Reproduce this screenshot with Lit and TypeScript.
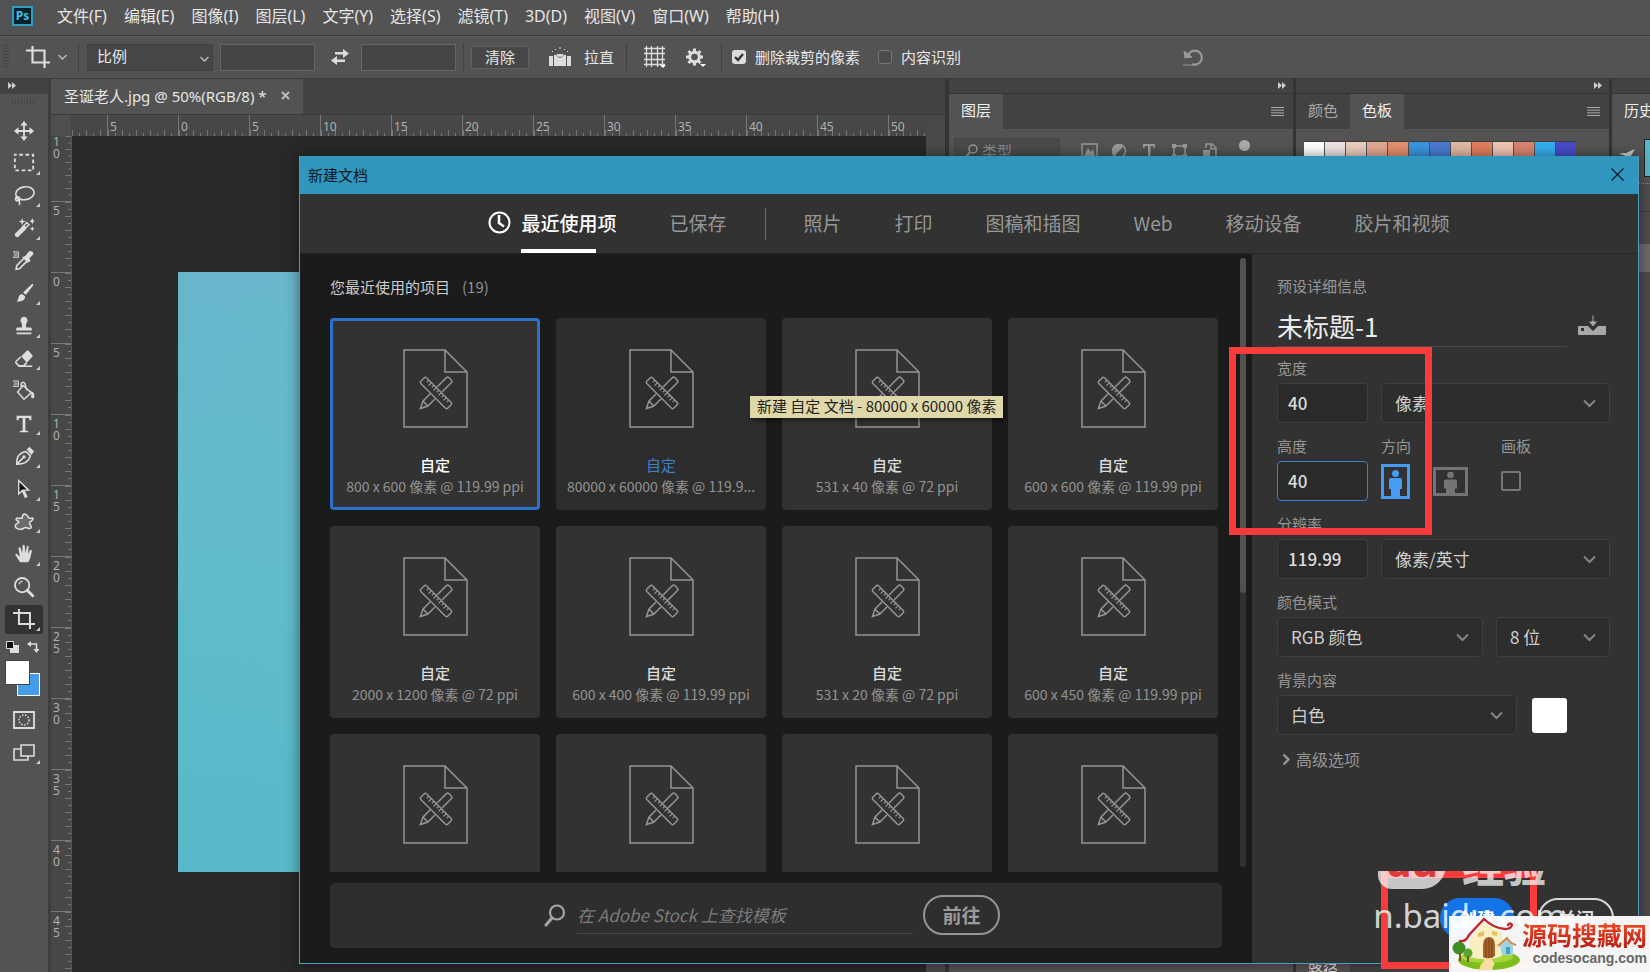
import { LitElement, html, css, svg } from "lit";
import { customElement, property, state } from "lit/decorators.js";
import { classMap } from "lit/directives/class-map.js";

const base = css`
  *, *::before, *::after { box-sizing: border-box; }
  button, input, select { font: inherit; color: inherit; margin: 0; padding: 0; border: 0; background: none; border-radius: 0; outline: 0; }
  select { appearance: none; }
  button { display: inline-flex; align-items: center; justify-content: center; white-space: nowrap; }
  svg { display: block; flex: none; }
`;

const TRANSPARENT_PIXEL_GRID = svg`<path d="M0 1h7v6H1z" fill="none" stroke="#ddd" stroke-width="1"/><path d="M2 2h1v1h-1zM4 2h1v1h-1zM3 3h1v1h-1zM5 3h1v1h-1zM2 4h1v1h-1zM4 4h1v1h-1zM3 5h1v1h-1zM5 5h1v1h-1z" fill="#ddd"/>`;

const CROP = svg`<path d="M0 5.500H18.500V23M6.500 1v16.500H24" fill="none" stroke="#ddd" stroke-width="2.200"/>`;

const TOOLS = [
  { name: "移动", more: false, art: svg`<g fill="#ddd"><path d="M11 4h2v16h-2zM4 11h16v2H4z"/><path d="M12 1l4 5H8zM12 23l4-5H8zM1 12l5-4v8zM23 12l-5-4v8z"/></g>` },
  { name: "选框", more: true, art: svg`<rect x="2" y="3" width="20" height="17" fill="none" stroke="#ddd" stroke-width="2" stroke-dasharray="4 2.800" stroke-dashoffset="2"/>` },
  { name: "套索", more: true, art: svg`<g fill="none" stroke="#ddd" stroke-width="1.800"><ellipse cx="13" cy="9" rx="10" ry="7" transform="rotate(-8 13 9)"/><circle cx="5" cy="15" r="2.200"/><path d="M3 14c3 1 5 3 4 8"/></g>` },
  { name: "魔棒", more: true, art: svg`<g fill="none" stroke="#ddd"><path d="M4.500 19.500L12 12" stroke-width="5" stroke-linecap="round"/><path d="M9 12.500l6-6.500 2.500 2.500-6.500 6" stroke-width="1.600"/></g><path d="M10 1l1 3 3 1-3 1-1 3-1-3-3-1 3-1zM21 1l1 2.500 2 1-2 1-1 2.500-1-2.500-2-1 2-1zM21 10l.8 2 2 .8-2 .8-.8 2-.8-2-2-.8 2-.8z" fill="#ddd"/>` },
  { name: "吸管", more: false, art: svg`<g transform="translate(-1 1)">${TRANSPARENT_PIXEL_GRID}</g><path d="M12 7l2-1 3-4c2-2 6 0 5 3l-4 4 1 3-3 2-6-6z" fill="#ddd"/><path d="M12 9l-8 8-.500 4 3.500-.500 8-8" fill="none" stroke="#ddd" stroke-width="1.800"/>` },
  { name: "画笔", more: true, art: svg`<path d="M21 2c1 0 1.500 1 .8 2L14 14l-3-2.500zM10 13l3 2.500c1 4-4 6.500-9 5.500 2-1.500 1.500-3 2.500-5.500.8-1.800 2-2.500 3.500-2.500z" fill="#ddd"/>` },
  { name: "图章", more: true, art: svg`<path d="M12 2a4 4 0 0 1 3 6.500c-1 1.500-1 3-.500 5h4.500q1.500 0 1.500 1.500v2h-17v-2q0-1.500 1.500-1.500h4.500c.500-2 .500-3.500-.500-5A4 4 0 0 1 12 2zM4 19h16v2H4z" fill="#ddd"/>` },
  { name: "橡皮擦", more: true, art: svg`<path d="M9 9l6-6q1-1 2 0l4 4.500q1 1 0 2l-6 6.500z" fill="#ddd"/><path d="M8.500 9.500l-5 5q-1 1 0 2l3 3h5l3.500-3.500M6 20h15" fill="none" stroke="#ddd" stroke-width="1.700"/>` },
  { name: "油漆桶", more: false, art: svg`<g transform="translate(-1 0)">${TRANSPARENT_PIXEL_GRID}</g><path d="M11 6l9 8-8 7-7-8zM9 8V4q2-3 4 0l2 7" fill="none" stroke="#ddd" stroke-width="1.600"/><path d="M19 12c4 1 5 4 4 7q-1.500 2-3 0c-.500-2 1-4-1-7z" fill="#ddd"/>` },
  { name: "文字", more: true, art: svg`<path d="M4 3h16v5h-2l-.500-2.500H13.500V19l3 .6V21h-9v-1.400l3-.6V5.500H6.500L6 8H4z" fill="#ddd"/>` },
  { name: "钢笔", more: true, art: svg`<path d="M4 21c0-8 2-12 10-14l5 5c-2 7-7 9-15 9zM4 21l7-7" fill="none" stroke="#ddd" stroke-width="1.700"/><circle cx="12" cy="13" r="1.800" fill="#ddd"/><path d="M15 5l3-3 5 5-3 4z" fill="#ddd"/>` },
  { name: "路径选择", more: true, art: svg`<path d="M5.500 1v18l4.500-4 3 7 3-1.500-3-6.500h6z" fill="#ddd"/><path d="M7 4.500v11l3-3h5z" fill="#111"/>` },
  { name: "自定形状", more: true, art: svg`<path d="M10 8c0-3 1-5 3.500-4.500S16 6 17 7.500s5-1 5 1-4 3-4 4.500 3 4 1.500 5.500-4.500-.500-6-.500-3 2.500-6 2-5-1.500-5-4 4-2.500 4-4-4-1.500-3-3.500 2.500.500 2.500-.500z" fill="#6b6b6b" stroke="#ddd" stroke-width="1.700"/>` },
  { name: "抓手", more: true, art: svg`<path d="M8 21c-2-2-3.500-5.500-5.500-8 0-2 2-1.500 3 0l2 2L6 6c0-2 2-2 2.500 0L10 11l.500-8c.300-1.500 2-1.500 2.300 0l.700 8 1.500-7c.500-1.500 2-1 2 .500L16.500 12l2-4c1-1.500 2.300-.500 2 1-1 4-1.500 9-4 12z" fill="#ddd"/>` },
  { name: "缩放", more: false, art: svg`<circle cx="10" cy="10" r="7.800" fill="none" stroke="#ddd" stroke-width="2"/><path d="M15.500 15.500l6 6" stroke="#ddd" stroke-width="3.200" stroke-linecap="round"/><path d="M6.500 9q1-3 4-3.300" fill="none" stroke="#ddd" stroke-width="1.200"/>` },
  { name: "裁剪", more: true, art: CROP },
];

@customElement("ps-menu-bar")
class MenuBar extends LitElement {
  static styles = [base, css`
    :host { display: flex; align-items: center; height: 36px; padding: 0 0 3px 12px; gap: 24px; background: #535353; border-bottom: 1px solid #3c3c3c; font-size: 16px; color: #e6e6e6; }
    .mark { display: grid; place-items: center; width: 21px; height: 20px; background: #04202c; border: 2px solid #2a9fc4; color: #42c0e6; font: bold 12px/16px "Noto Sans", sans-serif; }
    nav { display: flex; gap: 17px; }
    nav button { line-height: 22px; }
  `];
  render() {
    const items = ["文件(F)", "编辑(E)", "图像(I)", "图层(L)", "文字(Y)", "选择(S)", "滤镜(T)", "3D(D)", "视图(V)", "窗口(W)", "帮助(H)"];
    return html`<span class="mark">Ps</span><nav>${items.map((t) => html`<button>${t}</button>`)}</nav>`;
  }
}

@customElement("ps-options-bar")
class OptionsBar extends LitElement {
  static styles = [base, css`
    :host { display: flex; align-items: center; height: 43px; padding-bottom: 1px; background: #535353; border-bottom: 1px solid #3a3a3a; border-top: 1px solid #595959; font-size: 15px; line-height: 20px; color: #e8e8e8; }
    .grip { width: 6px; height: 24px; margin: 0 17px 0 3px; background: repeating-linear-gradient(#454545 0 1px, transparent 1px 3px); }
    .crop { gap: 8px; padding-right: 11px; }
    .sep { width: 1px; height: 28px; background: #404040; }
    .pick { position: relative; width: 126px; height: 27px; margin: 0 7px 0 8px; background: #464646; border: 1px solid #404040; }
    .pick select { width: 100%; height: 100%; padding: 0 0 3px 9px; }
    .pick svg { position: absolute; right: 3px; top: 11px; pointer-events: none; }
    .size { width: 95px; height: 27px; background: #454545; border: 1px solid #666; padding: 0 8px; }
    .swap { margin: 0 12px 0 16px; }
    .sep.tight { margin: 0 7px 0 7px; }
    .clear { width: 58px; height: 23px; background: #474747; border: 1px solid #5f5f5f; margin-right: 20px; }
    .straight { gap: 13px; margin-right: 12px; }
    .grid { margin: 0 20px 0 17px; }
    .gear { margin-right: 15px; }
    label { display: flex; align-items: center; gap: 9px; margin-left: 10px; white-space: nowrap; }
    label + label { margin-left: 18px; }
    input[type="checkbox"] { appearance: none; width: 14px; height: 14px; border: 1px solid #777; border-radius: 3px; background: #4b4b4b; }
    input[type="checkbox"]:checked { border: 0; background: #ddd url("data:image/svg+xml,%3Csvg xmlns='http://www.w3.org/2000/svg' viewBox='0 0 14 14'%3E%3Cpath d='M3 7l3 3 5-6' fill='none' stroke='%23333' stroke-width='2.400'/%3E%3C/svg%3E"); }
    .before { flex: 1; }
    .after { flex: 2; }
  `];
  render() {
    return html`
      <span class="grip"></span>
      <button class="crop" aria-label="裁剪">
        <svg width="24" height="24" viewBox="0 0 24 24">${CROP}</svg>
        <svg width="9" height="6" viewBox="0 0 9 6"><path d="M.5 1l4 4 4-4" fill="none" stroke="#bbb" stroke-width="1.500" /></svg>
      </button>
      <span class="sep"></span>
      <span class="pick"><select aria-label="预设"><option>比例</option></select>
        <svg width="9" height="6" viewBox="0 0 9 6"><path d="M.5 1l4 4 4-4" fill="none" stroke="#bbb" stroke-width="1.500" /></svg></span>
      <input class="size" aria-label="宽" />
      <button class="swap" aria-label="互换"><svg width="18" height="18" viewBox="0 0 18 18" fill="#ddd"><path d="M4 4h8V1l6 4.500-6 4.500V6.500H4zM14 14H6v3l-6-4.500L6 8v3.500h8z" /></svg></button>
      <input class="size" aria-label="高" />
      <span class="sep tight"></span>
      <button class="clear">清除</button>
      <button class="straight"><svg width="22" height="20" viewBox="0 0 22 20" fill="#ddd"><path d="M0 9h4v10H0zM18 9h4v10h-4zM5 8h2q4 6 8 0h2v11H5z" /><path d="M7.500 7a3.500 3 0 0 0 7 0z" /><path d="M3 4l1 1M6 2l1 1M11 0v2M16 2l-1 1M19 4l-1 1" stroke="#ddd" /></svg>拉直</button>
      <span class="sep"></span>
      <button class="grid" aria-label="叠加"><svg width="22" height="22" viewBox="0 0 22 22"><path d="M2.500 2.500h16v16h-16zM7.500 0v21M13.500 0v21M0 7.500h21M0 13.500h21M2.500 0v21M18.500 0v21M0 2.500h21M0 18.500h21" fill="none" stroke="#ddd" stroke-width="1.300" /><path d="M16 19h6l-3 3z" fill="#fff" /></svg></button>
      <button class="gear" aria-label="设置"><svg width="20" height="22" viewBox="0 0 20 22"><g transform="translate(8.500 11)"><circle r="4.800" fill="none" stroke="#ddd" stroke-width="3" /><path d="M0-8.500v4M0 4.500v4M-8.500 0h4M4.500 0h4M-6-6l3 3M3 3l3 3M-6 6l3-3M3-3l3-3" stroke="#ddd" stroke-width="3" /></g><path d="M14 18h6l-3 3z" fill="#fff" /></svg></button>
      <span class="sep"></span>
      <label><input type="checkbox" .checked=${true} />删除裁剪的像素</label>
      <label><input type="checkbox" />内容识别</label>
      <span class="before"></span>
      <button aria-label="复位"><svg width="22" height="19" viewBox="0 0 22 19"><path d="M5 8a7 7 0 1 1 4 8" fill="none" stroke="#999" stroke-width="2.200" /><path d="M1 3l1 7 7-1zM0 17h12" fill="#999" stroke="#999" stroke-width="1" /></svg></button>
      <span class="after"></span>`;
  }
}

@customElement("ps-tool-bar")
class ToolBar extends LitElement {
  @state() active = "裁剪";
  static styles = [base, css`
    :host { display: flex; flex-direction: column; width: 51px; flex: none; background: #535353; border-right: 3px solid #3e3e3e; }
    .head { height: 15px; background: #424242; padding: 3px 0 0 8px; }
    .grip { width: 23px; height: 5px; margin: 5px 0 0 12px; background: repeating-linear-gradient(90deg, #454545 0 1px, transparent 1px 3px); }
    .list { display: flex; flex-direction: column; align-items: center; justify-content: space-between; height: 518px; margin-top: 12px; }
    .tool { position: relative; width: 38px; height: 29px; border-radius: 2px; }
    .on { background: #333; }
    .more::after { content: ""; position: absolute; right: 3px; bottom: 3px; border: 2px solid transparent; border-right-color: #ccc; border-bottom-color: #ccc; }
    .mini { display: flex; justify-content: space-between; padding: 0 8px 0 6px; margin-top: 7px; }
    .colors { position: relative; height: 36px; margin-top: 8px; }
    .fore, .back { position: absolute; width: 23px; height: 23px; }
    .back { left: 17px; top: 12px; background: #459ceb; border: 1px solid #fff; }
    .fore { left: 6px; top: 0; background: #fff; outline: 1px solid #444; }
    .modes { display: flex; flex-direction: column; align-items: center; gap: 4px; margin-top: 8px; }
  `];
  render() {
    return html`
      <div class="head"><svg width="8" height="7" viewBox="0 0 8 7"><path d="M0 0l4 3.500L0 7zM4 0l4 3.500L4 7z" fill="#ccc" /></svg></div>
      <div class="grip"></div>
      <div class="list">${TOOLS.map((t) => html`
        <button class=${classMap({ tool: true, more: t.more, on: t.name === this.active })} aria-label=${t.name} @click=${() => (this.active = t.name)}>
          <svg width="22" height="22" viewBox="0 0 24 24">${t.art}</svg></button>`)}</div>
      <div class="mini">
        <svg width="13" height="12" viewBox="0 0 13 12"><path d="M4 4h9v8H4z" fill="#ddd" /><path d="M.5.5h7v7h-7z" fill="#111" stroke="#ddd" /></svg>
        <svg width="13" height="12" viewBox="0 0 13 12"><path d="M3 3h6.500v7" fill="none" stroke="#ddd" stroke-width="1.500" /><path d="M0 3l4-3v6zM6.500 8h6l-3 4z" fill="#ddd" /></svg>
      </div>
      <div class="colors"><span class="back"></span><span class="fore"></span></div>
      <div class="modes">
        <button class="tool" aria-label="快速蒙版"><svg width="22" height="18" viewBox="0 0 22 18"><path d="M1 1h20v16H1z" fill="none" stroke="#ddd" stroke-width="1.800" /><circle cx="11" cy="9" r="5" fill="none" stroke="#ddd" stroke-width="1.500" stroke-dasharray="1.500 1.500" /></svg></button>
        <button class="tool more" aria-label="屏幕模式"><svg width="22" height="17" viewBox="0 0 22 17"><path d="M1 5h14v11H1z" fill="none" stroke="#ddd" stroke-width="1.600" /><path d="M8 1h13v11H8z" fill="#535353" stroke="#ddd" stroke-width="1.600" /></svg></button>
      </div>`;
  }
}

@customElement("ps-document")
class DocumentView extends LitElement {
  static styles = [base, css`
    :host { display: grid; grid-template: 36px 21px 1fr / 21px 1fr 19px; flex: 1; min-width: 0; overflow: hidden; background: #424242; }
    .tabs { grid-column: 1 / -1; display: flex; border-bottom: 1px solid #3a3a3a; }
    .tab { display: flex; align-items: center; gap: 14px; padding: 0 13px 2px; background: #535353; color: #e6e6e6; font-size: 15px; line-height: 20px; white-space: nowrap; }
    .corner { background: #4f4f4f; border-right: 1px solid #444; }
    .across { display: flex; overflow: hidden; background: #474747; }
    .down { display: flex; flex-direction: column; overflow: hidden; background: #474747; border-right: 1px solid #555; }
    .mark { flex: none; color: #b0b0b0; font-size: 12px; line-height: 12px; }
    .across .mark { width: 71px; padding: 6px 0 0 2px; border-left: 1px solid #777;
      background: linear-gradient(90deg, #777 1px, transparent 1px) 0 100% / 20% 6px repeat-x, linear-gradient(90deg, #777 1px, transparent 1px) 0 100% / 10% 3px repeat-x; }
    .across .lead { width: 35px; border: 0; background-size: 14px 6px, 7px 3px; }
    .down .mark { height: 71px; width: 20px; padding: 3px 0 0 2px; border-top: 1px solid #777;
      background: linear-gradient(#777 1px, transparent 1px) 100% 0 / 6px 20% repeat-y, linear-gradient(#777 1px, transparent 1px) 100% 0 / 3px 10% repeat-y; }
    .down .lead { height: 65px; border: 0; padding-top: 0; }
    .digit { display: block; width: 8px; }
    .stage { background: #282828; overflow: hidden; padding: 136px 0 0 106px; }
    .picture { width: 700px; height: 600px; background: linear-gradient(100deg, #66b6cd00, #6fbcc8 30%), linear-gradient(#67b6cc, #66bbca 45%, #55b7c8); }
    .shade { height: 100%; background: linear-gradient(#68b6ccaa, #5fbccbcc 50%, #57b9c9); }
    .gutter { grid-column: 3; grid-row: 2 / 4; background: #494949; }
  `];
  render() {
    const across = ["5", "0", "5", "10", "15", "20", "25", "30", "35", "40", "45", "50"];
    const down = ["10", "5", "0", "5", "10", "15", "20", "25", "30", "35", "40", "45"];
    return html`
      <div class="tabs"><div class="tab">圣诞老人.jpg @ 50%(RGB/8) *
        <button aria-label="关闭文档"><svg width="9" height="9" viewBox="0 0 9 9"><path d="M1 1l7 7M8 1L1 8" stroke="#bbb" stroke-width="2" /></svg></button></div></div>
      <div class="corner"></div>
      <div class="across"><span class="mark lead"></span>${across.map((n) => html`<span class="mark">${n}</span>`)}</div>
      <div class="down">${down.map((n, i) => html`<span class=${classMap({ mark: true, lead: i === 0 })}>${[...n].map((d) => html`<span class="digit">${d}</span>`)}</span>`)}</div>
      <div class="stage"><div class="picture"><div class="shade"></div></div></div>
      <div class="gutter"></div>`;
  }
}

@customElement("ps-panels")
class Panels extends LitElement {
  static styles = [base, css`
    :host { display: flex; flex: none; background: #343434; border-left: 4px solid #343434; gap: 3px; font-size: 15px; line-height: 20px; color: #a8a8a8; }
    .col { display: flex; flex-direction: column; overflow: hidden; background: #4d4d4d; }
    .layers { width: 344px; }
    .swatches { width: 313px; }
    .history { width: 38px; }
    .head { display: flex; justify-content: flex-end; height: 15px; padding: 3px 7px 0; background: #424242; border-bottom: 1px solid #343434; flex: none; }
    .tabs { display: flex; align-items: center; height: 35px; background: #424242; flex: none; padding-right: 9px; }
    .tab { height: 100%; padding: 0 12px 3px; }
    .active { background: #535353; color: #f0f0f0; }
    .history .tab { flex: none; }
    .tabs svg { margin-left: auto; }
    .history .tabs { padding: 0; }
    .body { flex: 1; background: #535353; }
    .filter { display: flex; align-items: flex-start; padding: 9px 0 0 5px; }
    .kind { display: flex; align-items: center; justify-content: flex-start; gap: 4px; width: 106px; height: 27px; padding: 0 0 2px 10px; background: #4a4a4a; border: 1px solid #454545; color: #8a8a8a; margin-right: 21px; }
    .kinds { display: flex; gap: 13px; padding-top: 5px; }
    .dot { width: 11px; height: 11px; border-radius: 50%; background: #aaa; margin: 2px 0 0 21px; }
    .chips { display: flex; gap: 1px; padding: 12px 0 0 8px; }
    .chip { width: 20px; height: 20px; border-top: 1px solid #3c3c3c; }
    .foot { height: 18px; background: #424242; line-height: 32px; overflow: hidden; }
    .foot span { display: inline-block; background: #535353; padding: 0 12px; color: #ddd; }
    .snap { display: flex; gap: 9px; height: 55px; padding: 10px 0 0 7px; background: #535353; border-bottom: 1px dotted #888; }
    .snap svg { margin-top: 10px; }
    .thumb { flex: none; width: 40px; height: 38px; background: #55b7c8; border: 1px solid #222; }
    .line { height: 28px; border-bottom: 1px solid #3f3f3f; }
    .gap { height: 32px; }
    .current { height: 28px; background: #6a6a6a; }
    .old { flex: 1; background: #4b4b4b; }
  `];
  private arrows() { return html`<div class="head"><svg width="8" height="7" viewBox="0 0 8 7"><path d="M0 0l4 3.500L0 7zM4 0l4 3.500L4 7z" fill="#ccc" /></svg></div>`; }
  private menu() { return html`<svg width="13" height="9" viewBox="0 0 13 9"><path d="M0 .5h13M0 3.200h13M0 5.900h13M0 8.500h13" stroke="#aaa" /></svg>`; }
  render() {
    const chips = ["#ffffff", "#eee2e2", "#e9cdbd", "#dfa993", "#e58f6d", "#3b94df", "#4b7bcf", "#dfb8a6", "#e07f5d", "#efc4b3", "#d68570", "#34aff0", "#484bc9"];
    return html`
      <section class="col layers">${this.arrows()}
        <div class="tabs"><button class="tab active">图层</button>${this.menu()}</div>
        <div class="body"><div class="filter">
          <button class="kind"><svg width="13" height="13" viewBox="0 0 13 13"><circle cx="8" cy="5" r="4" fill="none" stroke="#999" stroke-width="1.500" /><path d="M5 8l-4 5" stroke="#999" stroke-width="2" /></svg>类型</button>
          <div class="kinds">
            <svg width="17" height="16" viewBox="0 0 17 16"><path d="M1 1h15v14H1z" fill="none" stroke="#999" stroke-width="1.500" /><path d="M3 13l4-8 3 4 2-3 2 7z" fill="#999" /></svg>
            <svg width="17" height="16" viewBox="0 0 17 16"><circle cx="8" cy="8" r="6.500" fill="none" stroke="#999" stroke-width="1.500" /><path d="M3 13A6.500 6.500 0 0 1 13 3z" fill="#999" /></svg>
            <svg width="17" height="16" viewBox="0 0 17 16"><path d="M2 1h12v4h-1.500L12 3H9.500v10H11v1.500H5.500V13H7V3H4L3.500 5H2z" fill="#999" /></svg>
            <svg width="17" height="16" viewBox="0 0 17 16"><path d="M3 3h11v10H3z" fill="none" stroke="#999" stroke-width="1.500" /><path d="M1 1h4v4H1zM12 1h4v4h-4zM1 11h4v4H1zM12 11h4v4h-4z" fill="#999" /></svg>
            <svg width="17" height="16" viewBox="0 0 17 16"><path d="M5 5V1h6l4 4v10H9M10 1v5h5" fill="none" stroke="#999" stroke-width="1.500" /><path d="M2 7h7v8H2z" fill="#999" /></svg>
          </div><span class="dot"></span></div></div>
      </section>
      <section class="col swatches">${this.arrows()}
        <div class="tabs"><button class="tab">颜色</button><button class="tab active">色板</button>${this.menu()}</div>
        <div class="body"><div class="chips">${chips.map((c) => html`<span class="chip" style="background:${c}"></span>`)}</div></div>
        <div class="foot"><span>路径</span></div>
      </section>
      <section class="col history"><div class="head"></div>
        <div class="tabs"><button class="tab active">历史</button></div>
        <div class="snap"><svg width="16" height="10" viewBox="0 0 16 10"><path d="M0 5l3-1 4 0 9-4-6 10H7L5 6z" fill="#ccc" /></svg><span class="thumb"></span></div>
        <div class="line"></div><div class="gap"></div><div class="current"></div><div class="old"></div>
      </section>`;
  }
}

@customElement("preset-card")
class PresetCard extends LitElement {
  @property() detail = "";
  @property({ type: Boolean, reflect: true }) selected = false;
  @property({ type: Boolean, reflect: true }) hovered = false;
  static styles = [base, css`
    :host { display: block; min-width: 0; }
    .card { display: flex; flex-direction: column; width: 100%; height: 192px; justify-content: flex-start; padding-top: 31px; background: #323232; border-radius: 4px; color: #ddd; font-size: 15px; line-height: 20px; overflow: hidden; }
    :host([selected]) .card { box-shadow: inset 0 0 0 3px #2b71cc; color: #fff; }
    :host([hovered]) .card { background: #2d2d2d; color: #3f82cb; }
    .name { margin-top: 27px; font-weight: 500; }
    :host([hovered]) .name { font-weight: 400; }
    .detail { margin-top: 1px; font-size: 14px; color: #939393; }
  `];
  render() {
    return html`<button class="card">
      <svg width="65" height="79" viewBox="0 0 65 79" fill="none" stroke="#959595" stroke-width="1.500">
        <path d="M1 1h41l22 22v55H1zM42 1v22h22" />
        <g transform="translate(33 44) rotate(45)"><rect x="-19" y="-4" width="38" height="8" rx="1.500" /><path d="M-14-4v3M-10.500-4v4M-7-4v3M-3.500-4v4M0-4v3M3.500-4v4M7-4v3M10.500-4v4M14-4v3" stroke-width="1.200" /></g>
        <g transform="translate(33 44) rotate(-45)"><path d="M5-3.500H18q2 0 2 2v3q0 2-2 2H5M-5-3.500h-10l-7 3.500 7 3.500h10M-15-3.500v7" /></g>
      </svg>
      <span class="name">自定</span><span class="detail">${this.detail}</span></button>`;
  }
}

@customElement("new-document-dialog")
class NewDocumentDialog extends LitElement {
  @state() tab = "最近使用项";
  static styles = [base, css`
    :host { display: flex; flex-direction: column; border: 1px solid #4a9dbb; border-top: 0; background: #1b1b1b; box-shadow: 0 0 12px #0007; overflow: visible; font-family: "Noto Sans CJK SC", "Noto Sans", sans-serif; }
    .title { display: flex; align-items: center; justify-content: space-between; height: 38px; flex: none; padding: 0 14px 1px 8px; background: #3196be; color: #0a1a22; font-size: 15px; line-height: 20px; }
    .tabs { display: flex; justify-content: center; align-items: stretch; gap: 53px; height: 60px; flex: none; background: #323232; border-bottom: 1px solid #272727; color: #979797; font-size: 19px; line-height: 24px; }
    .tab { position: relative; padding-bottom: 2px; }
    .tab svg { margin-right: 10px; }
    .on { color: #fff; font-weight: 500; }
    .on::after { content: ""; position: absolute; left: 33px; right: 20px; bottom: 0; height: 4px; background: #fff; }
    .rule { width: 1px; height: 32px; align-self: center; background: #6c6c6c; margin: 0 -15px; }
    .body { display: flex; flex: 1; min-height: 0; }
    .browse { display: flex; flex-direction: column; flex: 1; min-width: 0; }
    .scroll { display: flex; flex: 1; min-height: 0; }
    .presets { flex: 1; min-width: 0; overflow: hidden; padding: 22px 22px 0 30px; }
    h2 { display: flex; gap: 12px; margin: 0 0 21px; font-size: 15px; line-height: 21px; font-weight: 400; color: #ccc; }
    h2 span { color: #929292; }
    .cards { display: grid; grid-template-columns: repeat(4, 1fr); gap: 16px; }
    .track { width: 6px; margin: 4px 6px 5px 0; background: #303030; border-radius: 3px; }
    .thumb { height: 55%; background: #515151; border-radius: 3px; }
    .stock { display: flex; align-items: center; justify-content: center; height: 65px; flex: none; margin: 11px 30px 15px; padding: 0 8px 1px 0; background: #2e2e2e; border: 1px solid #333; border-radius: 5px; color: #9a9a9a; }
    .query { width: 336px; height: 38px; margin: 0 10px 0 11px; border-bottom: 1px solid #484848; font-size: 17px; }
    .query::placeholder { color: #7b7b7b; font-style: italic; opacity: 1; }
    .go { width: 77px; height: 40px; padding-bottom: 2px; border: 2px solid #959595; border-radius: 20px; font-size: 19px; font-weight: 700; }
    .side { display: flex; flex-direction: column; width: 386px; flex: none; padding: 22px 28px 25px 25px; background: #323232; color: #969696; font-size: 15px; line-height: 20px; }
    .name { display: flex; align-items: center; gap: 11px; margin: 11px 0; padding-right: 4px; }
    .name input { flex: 1; min-width: 0; height: 40px; padding-bottom: 2px; border-bottom: 1px solid #474747; font-size: 26px; color: #ececec; }
    .name button { padding-bottom: 3px; }
    .row { display: flex; gap: 13px; margin-bottom: 13px; align-items: flex-end; }
    .field { display: flex; flex-direction: column; gap: 5px; }
    .num { width: 91px; height: 40px; padding: 0 0 1px 10px; background: #2a2a2a; border: 1px solid #3f3f3f; border-radius: 4px; color: #dcdcdc; font-size: 17px; font-weight: 500; }
    .focus { border-color: #3f80cc; }
    .grow { flex: 1; }
    .bits { width: 114px; }
    .pick { position: relative; display: block; width: 100%; height: 40px; }
    .pick select { width: 100%; height: 100%; padding: 0 0 1px 13px; background: #2d2d2d; border: 1px solid #3f3f3f; border-radius: 4px; color: #cfcfcf; font-size: 17px; }
    .pick svg { position: absolute; right: 14px; top: 16px; pointer-events: none; }
    .way { display: flex; align-items: center; gap: 23px; height: 40px; width: 107px; }
    .way label { position: relative; }
    .way input { position: absolute; inset: 0; width: 100%; height: 100%; opacity: 0; }
    .board { display: flex; align-items: center; height: 40px; }
    .board input { appearance: none; width: 20px; height: 20px; border: 2px solid #757575; border-radius: 2px; }
    .fill { width: 35px; height: 35px; margin: 0 43px 2px 2px; background: #fff; border-radius: 3px; }
    .advanced { align-self: flex-start; gap: 5px; padding-left: 5px; font-size: 16px; line-height: 22px; }
    .actions { display: flex; justify-content: flex-end; gap: 24px; margin: auto -4px 0 0; }
    .actions button { height: 40px; width: 76px; border-radius: 20px; border: 2px solid #d8d8d8; color: #ddd; font-size: 18px; font-weight: 700; line-height: 30px; }
    .actions .create { background: #1473e6; border-color: #1473e6; color: #fff; width: 74px; }
    .tip { position: absolute; left: 450px; top: 240px; height: 22px; padding: 0 7px; background: #dfd8aa; color: #24221a; font-size: 15px; line-height: 20px; white-space: nowrap; box-shadow: 2px 3px 4px #0006; }
  `];
  private pick(id: string, label: string, value: string) {
    return html`<span class="pick"><select id=${id} aria-label=${label}><option>${value}</option></select>
      <svg width="13" height="9" viewBox="0 0 13 9"><path d="M1 1.500l5.500 5.500L12 1.500" fill="none" stroke="#858585" stroke-width="2" /></svg></span>`;
  }
  render() {
    const tabs = ["最近使用项", "已保存", "", "照片", "打印", "图稿和插图", "Web", "移动设备", "胶片和视频"];
    const presets = ["800 x 600 像素 @ 119.99 ppi", "80000 x 60000 像素 @ 119.9...", "531 x 40 像素 @ 72 ppi", "600 x 600 像素 @ 119.99 ppi",
      "2000 x 1200 像素 @ 72 ppi", "600 x 400 像素 @ 119.99 ppi", "531 x 20 像素 @ 72 ppi", "600 x 450 像素 @ 119.99 ppi", "", "", "", ""];
    return html`
      <header class="title"><span>新建文档</span><button aria-label="关闭窗口"><svg width="13" height="13" viewBox="0 0 13 13"><path d="M.5.5l12 12M12.500.5l-12 12" stroke="#0d1e28" stroke-width="1.300" /></svg></button></header>
      <nav class="tabs">${tabs.map((t) => t === "" ? html`<span class="rule"></span>` : html`
        <button class=${classMap({ tab: true, on: t === this.tab })} @click=${() => (this.tab = t)}>${t === "最近使用项" ? html`<svg width="23" height="23" viewBox="0 0 23 23"><circle cx="11.500" cy="11.500" r="10" fill="none" stroke="#fff" stroke-width="2" /><path d="M11 4v8l5 3.500" fill="none" stroke="#fff" stroke-width="2.600" /></svg>` : ""}${t}</button>`)}</nav>
      <div class="body">
        <div class="browse">
          <div class="scroll">
            <div class="presets"><h2>您最近使用的项目 <span>(19)</span></h2>
              <div class="cards">${presets.map((p, i) => html`<preset-card .detail=${p} ?selected=${i === 0} ?hovered=${i === 1}></preset-card>`)}</div></div>
            <div class="track"><div class="thumb"></div></div>
          </div>
          <div class="stock">
            <svg width="22" height="23" viewBox="0 0 22 23"><circle cx="13" cy="8.500" r="7" fill="none" stroke="#a5a5a5" stroke-width="2.200" /><path d="M8 14l-6 7" stroke="#a5a5a5" stroke-width="3" stroke-linecap="round" /></svg>
            <input class="query" aria-label="查找模板" placeholder="在 Adobe Stock 上查找模板" />
            <button class="go">前往</button>
          </div>
        </div>
        <form class="side" @submit=${(e: Event) => e.preventDefault()}>
          <label for="name">预设详细信息</label>
          <div class="name"><input id="name" .value=${"未标题-1"} />
            <button type="button" aria-label="存储预设"><svg width="28" height="21" viewBox="0 0 28 21" fill="#a8a8a8"><path d="M1 11h9l5 5 5-5h8v8q0 1-1 1H1q-1 0-1-1v-7q0-1 1-1z" /><path d="M14 0h2v6h4l-5 6-5-6h4z" stroke="#323232" /><path d="M3 13h3v3H3z" fill="#323232" /></svg></button></div>
          <div class="row"><div class="field"><label for="w">宽度</label><input id="w" class="num" .value=${"40"} /></div><div class="grow">${this.pick("unit", "单位", "像素")}</div></div>
          <div class="row"><div class="field"><label for="h">高度</label><input id="h" class="num focus" .value=${"40"} /></div>
            <div class="field"><span>方向</span><div class="way">
              <label><input type="radio" name="way" aria-label="纵向" .checked=${true} /><svg width="29" height="35" viewBox="0 0 29 35"><path d="M1.500 1.500h26v32h-26z" fill="none" stroke="#469bf4" stroke-width="3" /><circle cx="14.500" cy="9.500" r="3.500" fill="#469bf4" /><path d="M10 14h9q2 0 2 2v9h-2v8h-9v-8H8v-9q0-2 2-2z" fill="#469bf4" /></svg></label>
              <label><input type="radio" name="way" aria-label="横向" /><svg width="35" height="29" viewBox="0 0 35 29"><path d="M1.500 1.500h32v26h-32z" fill="none" stroke="#747474" stroke-width="3" /><circle cx="17.500" cy="8" r="3.300" fill="#747474" /><path d="M13 12.500h9q2 0 2 2v7h-2v6h-9v-6h-2v-7q0-2 2-2z" fill="#747474" /></svg></label></div></div>
            <div class="field"><label for="board">画板</label><span class="board"><input id="board" type="checkbox" /></span></div></div>
          <div class="row"><div class="field"><label for="res">分辨率</label><input id="res" class="num" .value=${"119.99"} /></div><div class="grow">${this.pick("resunit", "分辨率单位", "像素/英寸")}</div></div>
          <div class="row"><div class="field grow"><label for="mode">颜色模式</label>${this.pick("mode", "颜色模式", "RGB 颜色")}</div><div class="bits">${this.pick("bits", "位深", "8 位")}</div></div>
          <div class="row"><div class="field grow"><label for="bg">背景内容</label>${this.pick("bg", "背景内容", "白色")}</div><button type="button" class="fill" aria-label="背景颜色"></button></div>
          <button type="button" class="advanced"><svg width="9" height="13" viewBox="0 0 9 13"><path d="M1.500 1.500l5 5-5 5" fill="none" stroke="#969696" stroke-width="2.400" /></svg>高级选项</button>
          <div class="actions"><button class="create">创建</button><button type="button">关闭</button></div>
        </form>
      </div>
      <div class="tip" role="tooltip">新建 自定 文档 - 80000 x 60000 像素</div>`;
  }
}

@customElement("site-badge")
class SiteBadge extends LitElement {
  static styles = [base, css`
    :host { display: flex; align-items: center; justify-content: space-between; background: #fffffff2; padding: 0 3px; }
    .words { display: flex; flex-direction: column; align-items: flex-end; }
    .cn { font-size: 25px; line-height: 27px; font-weight: 700; color: transparent; background: linear-gradient(#ee4a26, #b81d12); background-clip: text; -webkit-background-clip: text; white-space: nowrap; }
    .en { font: bold 14px/18px "Liberation Sans", sans-serif; color: #666; }
  `];
  render() {
    return html`
      <svg width="68" height="54" viewBox="0 0 68 54">
        <ellipse cx="37" cy="43" rx="31" ry="10" fill="#7cbf1c" /><ellipse cx="35" cy="40" rx="26" ry="6" fill="#a6d63a" />
        <path d="M17 24L31 5l19 11v23q-14 6-33 1z" fill="#fbeec0" />
        <path d="M33 37c-6 4 4 6-4 10l-2 6h14c-2-4 4-5 0-9s2-5 0-7z" fill="#f8dca0" />
        <path d="M31 40V29q0-9 6-9t6 9v10q-6 4-12 1z" fill="#a4642b" /><path d="M34 23v18M37 21v20M40 23v18" stroke="#7a431a" />
        <path d="M8 24q6 1 9-6L32 2q9 9 21 10 6 0 7-4-2-3-4 0" fill="none" stroke="#c5252c" stroke-width="2.400" stroke-linecap="round" />
        <path d="M26 16l6-2v5l-6 1zM40 14l5 1v4l-5-1z" fill="#e2c064" />
        <path d="M48 29l8-8 5 8v9H50z" fill="#9bd5e4" /><path d="M46 29l9-8q4 6 9 7" fill="none" stroke="#d98442" stroke-width="2" /><path d="M54 30h4v7h-4z" fill="#4d9cb7" />
        <circle cx="7" cy="31" r="6.500" fill="#3f8f24" /><circle cx="16" cy="36" r="4.500" fill="#58a72b" /><path d="M8 36v8M16 39v6" stroke="#80501f" stroke-width="2" />
      </svg>
      <div class="words"><span class="cn">源码搜藏网</span><span class="en">codesocang.com</span></div>`;
  }
}

@customElement("app-root")
class AppRoot extends LitElement {
  static styles = [base, css`
    :host { position: relative; display: flex; flex-direction: column; height: 100vh; overflow: hidden; background: #424242; font-family: "Noto Sans", "Noto Sans CJK SC", sans-serif; }
    .work { display: flex; flex: 1; min-height: 0; }
    .dialog { position: absolute; left: 299px; right: 11px; top: 156px; bottom: 8px; }
    .frame { position: absolute; border: 7px solid #f93b3b; pointer-events: none; }
    .sizes { right: 218px; top: 347px; width: 203px; height: 188px; }
    .confirm { right: 113px; bottom: 3px; width: 156px; height: 98px; }
    .stamp { position: absolute; right: 104px; bottom: 83px; width: 168px; height: 18px; overflow: hidden; color: #ffffffb8; }
    .blob { position: absolute; left: 0; bottom: 0; width: 68px; height: 40px; border-radius: 8px 8px 24px 14px; background: #ffffffb8; }
    .du { position: absolute; left: 8px; bottom: 5px; color: #e03a3c; font-size: 40px; line-height: 44px; font-weight: 800; }
    .exp { position: absolute; right: 0; bottom: 0; font-size: 42px; line-height: 46px; font-weight: 900; white-space: nowrap; }
    .url { position: absolute; right: 84px; bottom: 34px; font-size: 33px; line-height: 45px; color: #ffffffcc; }
    .badge { position: absolute; right: 0; bottom: 0; width: 201px; height: 56px; }
  `];
  render() {
    return html`
      <ps-menu-bar></ps-menu-bar>
      <ps-options-bar></ps-options-bar>
      <div class="work"><ps-tool-bar></ps-tool-bar><ps-document></ps-document><ps-panels></ps-panels></div>
      <new-document-dialog class="dialog"></new-document-dialog>
      <div class="frame sizes"></div><div class="frame confirm"></div>
      <div class="stamp"><span class="blob"></span><span class="du">du</span><span class="exp">经验</span></div>
      <div class="url">n.baidu.com</div>
      <site-badge class="badge"></site-badge>`;
  }
}
